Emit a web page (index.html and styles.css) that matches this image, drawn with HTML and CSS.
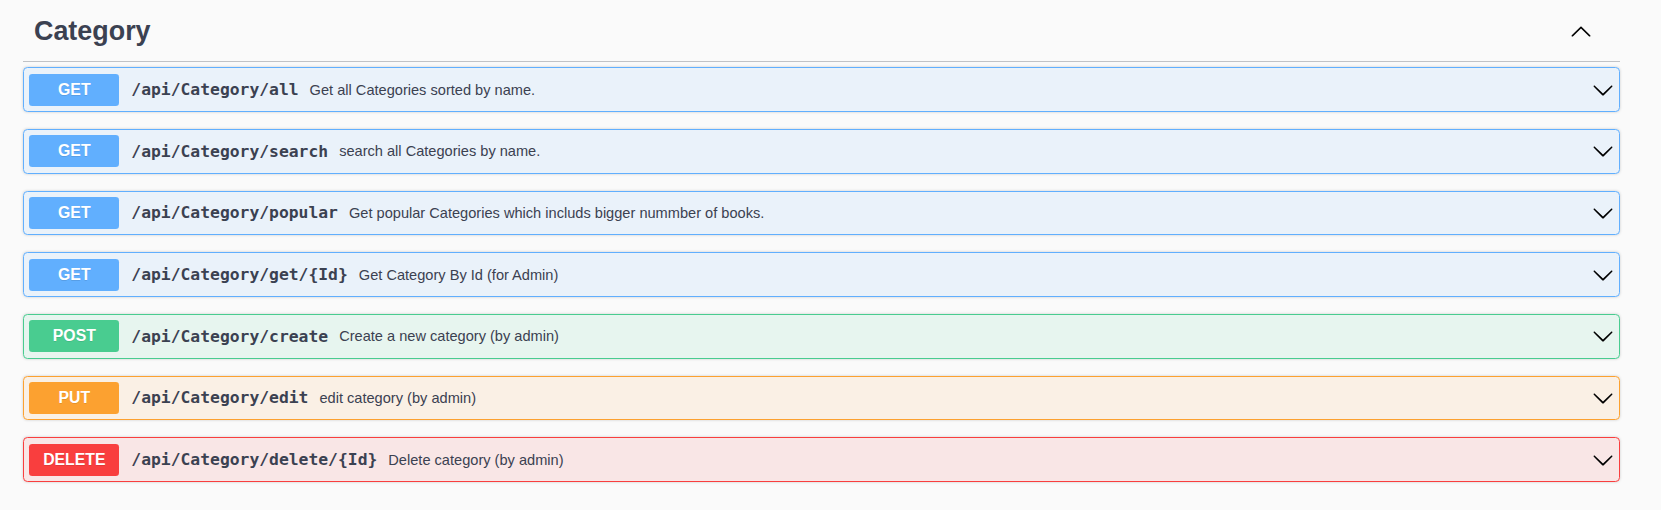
FILE: index.html
```html
<!DOCTYPE html>
<html lang="en">
<head>
<meta charset="utf-8">
<title>Category</title>
<link rel="stylesheet" href="styles.css">
</head>
<body>
<div class="wrapper">
  <div class="tag">
    <h3 class="tag-title">Category</h3>
    <svg class="tag-arrow" viewBox="0 0 20 20" width="22" height="22"><path d="M17.418 14.908c.272.268.709.268.979 0s.271-.701 0-.969l-7.908-7.83c-.27-.268-.707-.268-.979 0l-7.908 7.83c-.27.268-.27.701 0 .969.271.268.709.268.979 0L10 7.767l7.418 7.141z"/></svg>
  </div>

  <div class="opblock get">
    <span class="method">GET</span>
    <span class="path">/api/Category/all</span>
    <span class="desc">Get all Categories sorted by name.</span>
    <svg class="chev" viewBox="0 0 20 20" width="22" height="22"><path d="M17.418 6.109c.272-.268.709-.268.979 0s.271.701 0 .969l-7.908 7.83c-.27.268-.707.268-.979 0l-7.908-7.83c-.27-.268-.27-.701 0-.969.271-.268.709-.268.979 0L10 13.25l7.418-7.141z"/></svg>
  </div>

  <div class="opblock get">
    <span class="method">GET</span>
    <span class="path">/api/Category/search</span>
    <span class="desc">search all Categories by name.</span>
    <svg class="chev" viewBox="0 0 20 20" width="22" height="22"><path d="M17.418 6.109c.272-.268.709-.268.979 0s.271.701 0 .969l-7.908 7.83c-.27.268-.707.268-.979 0l-7.908-7.83c-.27-.268-.27-.701 0-.969.271-.268.709-.268.979 0L10 13.25l7.418-7.141z"/></svg>
  </div>

  <div class="opblock get">
    <span class="method">GET</span>
    <span class="path">/api/Category/popular</span>
    <span class="desc">Get popular Categories which includs bigger nummber of books.</span>
    <svg class="chev" viewBox="0 0 20 20" width="22" height="22"><path d="M17.418 6.109c.272-.268.709-.268.979 0s.271.701 0 .969l-7.908 7.83c-.27.268-.707.268-.979 0l-7.908-7.83c-.27-.268-.27-.701 0-.969.271-.268.709-.268.979 0L10 13.25l7.418-7.141z"/></svg>
  </div>

  <div class="opblock get">
    <span class="method">GET</span>
    <span class="path">/api/Category/get/{Id}</span>
    <span class="desc">Get Category By Id (for Admin)</span>
    <svg class="chev" viewBox="0 0 20 20" width="22" height="22"><path d="M17.418 6.109c.272-.268.709-.268.979 0s.271.701 0 .969l-7.908 7.83c-.27.268-.707.268-.979 0l-7.908-7.83c-.27-.268-.27-.701 0-.969.271-.268.709-.268.979 0L10 13.25l7.418-7.141z"/></svg>
  </div>

  <div class="opblock post">
    <span class="method">POST</span>
    <span class="path">/api/Category/create</span>
    <span class="desc">Create a new category (by admin)</span>
    <svg class="chev" viewBox="0 0 20 20" width="22" height="22"><path d="M17.418 6.109c.272-.268.709-.268.979 0s.271.701 0 .969l-7.908 7.83c-.27.268-.707.268-.979 0l-7.908-7.83c-.27-.268-.27-.701 0-.969.271-.268.709-.268.979 0L10 13.25l7.418-7.141z"/></svg>
  </div>

  <div class="opblock put">
    <span class="method">PUT</span>
    <span class="path">/api/Category/edit</span>
    <span class="desc">edit category (by admin)</span>
    <svg class="chev" viewBox="0 0 20 20" width="22" height="22"><path d="M17.418 6.109c.272-.268.709-.268.979 0s.271.701 0 .969l-7.908 7.83c-.27.268-.707.268-.979 0l-7.908-7.83c-.27-.268-.27-.701 0-.969.271-.268.709-.268.979 0L10 13.25l7.418-7.141z"/></svg>
  </div>

  <div class="opblock delete">
    <span class="method">DELETE</span>
    <span class="path">/api/Category/delete/{Id}</span>
    <span class="desc">Delete category (by admin)</span>
    <svg class="chev" viewBox="0 0 20 20" width="22" height="22"><path d="M17.418 6.109c.272-.268.709-.268.979 0s.271.701 0 .969l-7.908 7.83c-.27.268-.707.268-.979 0l-7.908-7.83c-.27-.268-.27-.701 0-.969.271-.268.709-.268.979 0L10 13.25l7.418-7.141z"/></svg>
  </div>
</div>
</body>
</html>
```

FILE: styles.css
```css
html, body {
  margin: 0;
  padding: 0;
  background: #fafafa;
}

body {
  font-family: "Liberation Sans", Arial, sans-serif;
  color: #3b4151;
}

.wrapper {
  margin-left: 23px;
  width: 1597px;
}

.tag {
  box-sizing: border-box;
  display: flex;
  align-items: center;
  height: 62px;
  padding: 2px 0 0 11px;
  border-bottom: 1px solid rgba(59, 65, 81, 0.3);
  margin-bottom: 5.3px;
}

.tag-title {
  flex: 1;
  margin: 0;
  font-size: 26.9px;
  font-weight: bold;
  color: #3b4151;
}

.tag-arrow {
  margin-right: 28.5px;
  margin-bottom: 2px;
  fill: #000;
}

.opblock {
  display: flex;
  align-items: center;
  padding: 5.33px;
  border: 1px solid;
  border-radius: 4.4px;
  box-shadow: 0 0 3px rgba(0, 0, 0, 0.19);
  margin-bottom: 17px;
}

.method {
  display: flex;
  align-items: center;
  justify-content: center;
  width: 90px;
  height: 32px;
  flex: none;
  border-radius: 3.3px;
  font-size: 15.8px;
  font-weight: bold;
  color: #fff;
  text-shadow: 0 1px 0 rgba(0, 0, 0, 0.1);
}

.path {
  margin-left: 12px;
  font-family: "DejaVu Sans Mono", "Liberation Mono", monospace;
  font-weight: bold;
  font-size: 16.35px;
  color: #3b4151;
}

.desc {
  flex: 1;
  margin-left: 11px;
  font-size: 14.6px;
  color: #3b4151;
}

.chev {
  flex: none;
  fill: #000;
}

.get { background: rgba(97, 175, 254, 0.1); border-color: #61affe; }
.get .method { background: #61affe; }

.post { background: rgba(73, 204, 144, 0.1); border-color: #49cc90; }
.post .method { background: #49cc90; }

.put { background: rgba(252, 161, 48, 0.1); border-color: #fca130; }
.put .method { background: #fca130; }

.delete { background: rgba(249, 62, 62, 0.1); border-color: #f93e3e; }
.delete .method { background: #f93e3e; }
```
